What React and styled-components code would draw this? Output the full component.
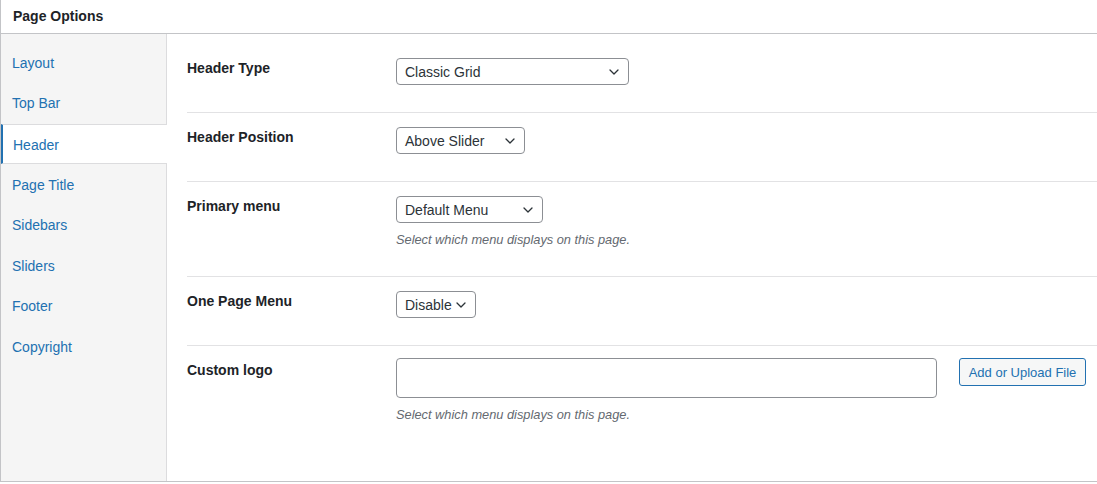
import React from "react";
import styled, { createGlobalStyle } from "styled-components";

const GlobalStyle = createGlobalStyle`
  html, body {
    margin: 0;
    padding: 0;
    background: #fff;
    overflow: hidden;
  }
  body {
    font-family: "Liberation Sans", Arial, sans-serif;
    color: #1d2327;
  }
`;

const tabs = [
  "Layout",
  "Top Bar",
  "Header",
  "Page Title",
  "Sidebars",
  "Sliders",
  "Footer",
  "Copyright",
];

const Chevron = () => (
  <svg width="10" height="6" viewBox="0 0 10 6" fill="none">
    <path
      d="M1 1l4 4 4-4"
      stroke="#2c3338"
      strokeWidth="1.3"
      strokeLinecap="round"
      strokeLinejoin="round"
    />
  </svg>
);

const Select = ({ value, width }) => (
  <SelectBox $width={width}>
    <span>{value}</span>
    <Chevron />
  </SelectBox>
);

const App = () => {
  return (
    <>
      <GlobalStyle />
      <Panel>
        <PanelHeader>Page Options</PanelHeader>
        <PanelBody>
          <TabList>
            {tabs.map((t) => (
              <Tab key={t} $active={t === "Header"}>
                {t}
              </Tab>
            ))}
          </TabList>
          <Fields>
            <Row>
              <Label>Header Type</Label>
              <Field>
                <Select value="Classic Grid" width={233} />
              </Field>
            </Row>
            <Row>
              <Label>Header Position</Label>
              <Field>
                <Select value="Above Slider" width={129} />
              </Field>
            </Row>
            <Row>
              <Label>Primary menu</Label>
              <Field>
                <Select value="Default Menu" width={147} />
                <Description>Select which menu displays on this page.</Description>
              </Field>
            </Row>
            <Row>
              <Label>One Page Menu</Label>
              <Field>
                <Select value="Disable" width={80} />
              </Field>
            </Row>
            <Row $last>
              <Label>Custom logo</Label>
              <Field>
                <UploadLine>
                  <TextInput type="text" />
                  <UploadButton>Add or Upload File</UploadButton>
                </UploadLine>
                <Description>Select which menu displays on this page.</Description>
              </Field>
            </Row>
          </Fields>
        </PanelBody>
      </Panel>
    </>
  );
};

const Panel = styled.div`
  width: 1097px;
  height: 482px;
  box-sizing: border-box;
  border-left: 1px solid #c3c4c7;
  border-bottom: 1px solid #c3c4c7;
  display: flex;
  flex-direction: column;
  background: #fff;
`;

const PanelHeader = styled.div`
  height: 32px;
  flex: none;
  border-bottom: 1px solid #c3c4c7;
  padding: 0 0 1px 12px;
  display: flex;
  align-items: center;
  font-size: 14px;
  font-weight: 700;
  color: #1d2327;
`;

const PanelBody = styled.div`
  flex: 1;
  display: flex;
  min-height: 0;
`;

const TabList = styled.ul`
  list-style: none;
  margin: 0;
  padding: 8.5px 0 0;
  width: 165px;
  flex: none;
  background: #f5f5f5;
  border-right: 1px solid #dcdcde;
`;

const Tab = styled.li`
  height: 40.6px;
  box-sizing: border-box;
  display: flex;
  align-items: center;
  padding-left: 11px;
  font-size: 14px;
  color: #2271b1;
  ${({ $active }) =>
    $active &&
    `
    background: #fff;
    margin-right: -1px;
    border-top: 1px solid #dcdcde;
    border-bottom: 1px solid #dcdcde;
    border-left: 2px solid #2271b1;
    padding: 2px 0 0 10px;
  `}
`;

const Fields = styled.div`
  flex: 1;
  padding: 10px 0 0 20px;
`;

const Row = styled.div`
  display: grid;
  grid-template-columns: 209px 1fr;
  padding: 14px 0 27px;
  border-bottom: ${({ $last }) => ($last ? "none" : "1px solid #e2e2e4")};
`;

const Label = styled.div`
  font-size: 14px;
  font-weight: 700;
  line-height: 20px;
  color: #1d2327;
`;

const Field = styled.div`
  padding-right: 11px;
`;

const SelectBox = styled.div`
  width: ${({ $width }) => $width}px;
  height: 27px;
  box-sizing: border-box;
  border: 1px solid #8c8f94;
  border-radius: 4px;
  display: flex;
  align-items: center;
  justify-content: space-between;
  padding: 0 9px 0 8px;
  font-size: 14px;
  color: #2c3338;
  background: #fff;
`;

const Description = styled.p`
  margin: 8px 0 0;
  font-size: 12.8px;
  line-height: 18px;
  font-style: italic;
  color: #646970;
`;

const UploadLine = styled.div`
  display: flex;
  align-items: flex-start;
  gap: 22px;
  margin-top: -2px;
`;

const TextInput = styled.input`
  flex: 1;
  height: 40px;
  box-sizing: border-box;
  border: 1px solid #8c8f94;
  border-radius: 4px;
  background: #fff;
  padding: 0 8px;
  font-size: 14px;
  font-family: inherit;
  outline: none;
`;

const UploadButton = styled.button`
  width: 127px;
  height: 28px;
  box-sizing: border-box;
  border: 1px solid #2271b1;
  border-radius: 3px;
  background: #f6f7f7;
  color: #2271b1;
  font-family: inherit;
  font-size: 13px;
  padding: 0;
  cursor: pointer;
`;

export default App;
